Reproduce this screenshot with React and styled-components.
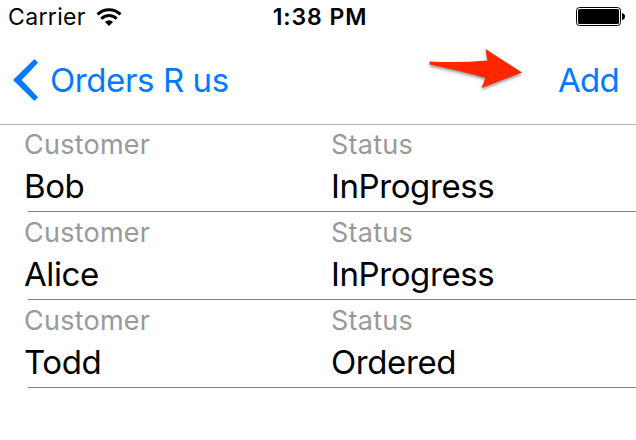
import React from "react";
import styled, { createGlobalStyle } from "styled-components";

const Global = createGlobalStyle`
  * { box-sizing: border-box; }
  body { margin: 0; background: #fff; font-family: Inter, "Liberation Sans", sans-serif; }
`;
const Screen = styled.div`
  width: 636px; height: 440px; overflow: hidden; background: #fff; color: #000;
`;
const StatusBar = styled.header`
  display: grid; grid-template-columns: 1fr auto 1fr; align-items: center;
  height: 34px; padding: 0 10px 0 8px; background: #fff;
`;
const Carrier = styled.div`
  display: flex; align-items: center; gap: 10px; font-size: 23px; line-height: 34px; letter-spacing: 0.35px; font-weight: 380;
`;
const Clock = styled.time`
  font-size: 23px; font-weight: 570; line-height: 34px; letter-spacing: 0.9px; margin-right: -6px;
`;
const Battery = styled.svg`
  justify-self: end; display: block;
`;
const NavBar = styled.nav`
  display: flex; align-items: center;
  height: 91px; padding: 2px 17px 0 13px; border-bottom: 1px solid #b2b2b2;
`;
const NavButton = styled.button`
  display: flex; align-items: center; gap: 11px; border: 0; padding: 0; background: none;
  color: #007aff; font: inherit; font-size: 33px; line-height: 40px; letter-spacing: ${(p) => p.$spacing}; font-weight: 380;
`;
const Arrow = styled.svg`
  display: block; overflow: visible; margin: -22px 36px 0 auto;
  filter: drop-shadow(0 2px 1.5px rgba(0, 0, 0, 0.4));
`;
const OrderRow = styled.li`
  display: grid; grid-template-columns: 307px 1fr; height: 88px; padding-left: 24px;
  background: linear-gradient(#7f7f7f, #7f7f7f) 28px 86px / 100% 1px no-repeat;
`;
const Orders = styled.ul`
  margin: 0; padding: 0; list-style: none;
`;
const Label = styled.div`
  padding-top: 2px; color: #999; font-size: 27px; line-height: 36px; letter-spacing: 0.25px; font-weight: 380;
`;
const Value = styled.div`
  font-size: 33px; line-height: 46px; letter-spacing: -0.4px; font-weight: 380;
`;

const orders = [
  { customer: "Bob", status: "InProgress" },
  { customer: "Alice", status: "InProgress" },
  { customer: "Todd", status: "Ordered" },
];

export default function App() {
  return (
    <Screen>
      <Global />
      <StatusBar>
        <Carrier>
          <span>Carrier</span>
          <svg width="26" height="20" viewBox="0 0 26 20" fill="none" stroke="#000" strokeWidth="3">
            <path d="M1.5 7.4a16.3 16.3 0 0 1 23 0M5.3 11.7a10.9 10.9 0 0 1 15.4 0" />
            <path d="M13 19l-4-4a5.7 5.7 0 0 1 8 0z" fill="#000" stroke="none" />
          </svg>
        </Carrier>
        <Clock>1:38 PM</Clock>
        <Battery width="50" height="20" viewBox="0 0 50 20">
          <rect x="0.5" y="0.5" width="44" height="18" rx="3" fill="none" stroke="#000" />
          <rect x="2" y="2" width="41" height="15" rx="1.5" />
          <path d="M46 6q3 .5 3 3.5t-3 3.5z" />
        </Battery>
      </StatusBar>
      <NavBar>
        <NavButton $spacing="-0.4px">
          <svg width="26" height="42" viewBox="0 0 26 42" fill="#007aff">
            <path d="M21.5 0L25 3.7 8.7 21 25 38.3 21.5 42 0 21z" />
          </svg>
          Orders R us
        </NavButton>
        <Arrow width="93" height="40" viewBox="0 0 93 40">
          <path d="M0.5 12.5Q30 14 58.5 11.5L56.5 0 93 23.5 52.5 39 56.5 29Q45 25 0.5 15.5z" fill="#ff2600" />
        </Arrow>
        <NavButton $spacing="-0.7px">Add</NavButton>
      </NavBar>
      <Orders>
        {orders.map((o) => (
          <OrderRow key={o.customer}>
            <div><Label>Customer</Label><Value>{o.customer}</Value></div>
            <div><Label>Status</Label><Value>{o.status}</Value></div>
          </OrderRow>
        ))}
      </Orders>
    </Screen>
  );
}
